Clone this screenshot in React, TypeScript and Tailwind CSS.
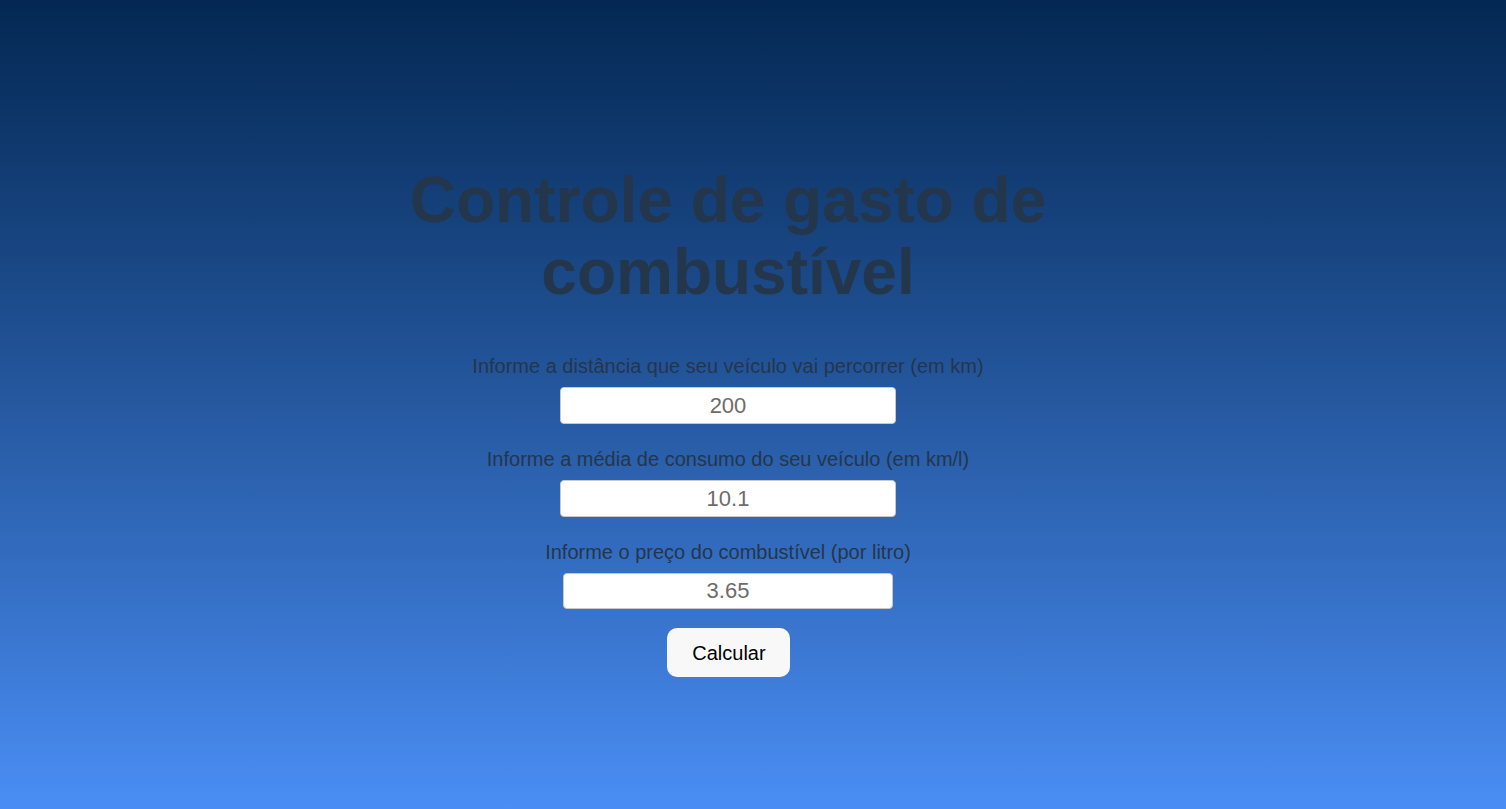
const fields = [
  { label: 'Informe a distância que seu veículo vai percorrer (em km)', value: '200', w: 'w-[336px]', h: 'h-[37px]' },
  { label: 'Informe a média de consumo do seu veículo (em km/l)', value: '10.1', w: 'w-[336px]', h: 'h-[37px]' },
  { label: 'Informe o preço do combustível (por litro)', value: '3.65', w: 'w-[330px]', h: 'h-[36px]' }
];

const App = () => {
  return (
    <div className="min-h-[809px] w-full bg-gradient-to-b from-[#042853] to-[#4a8ef5] font-['Liberation_Sans',Arial,sans-serif] pr-[50px] flex justify-center">
      <div className="w-[680px] flex flex-col items-center pt-[164px]">
        <h1 className="text-center text-[64px] leading-[72px] font-bold text-[#24364b]">
          Controle de gasto de combustível
        </h1>
        <div className="flex flex-col items-center mt-[47px]">
          {fields.map((f, i) => (
            <div key={i} className="flex flex-col items-center mb-[24px]">
              <label className="text-[20px] leading-[23px] text-[#24364b]">{f.label}</label>
              <input
                defaultValue={f.value}
                className={`${f.w} ${f.h} mt-[9px] bg-white rounded-[4px] border border-[#c8c8c8] text-center text-[22px] text-[#6f6b68] outline-none`}
              />
            </div>
          ))}
          <button className="-mt-[5px] ml-[2px] w-[123px] h-[49px] rounded-[10px] bg-[#f8f8f8] text-[20px] text-black">
            Calcular
          </button>
        </div>
      </div>
    </div>
  );
};

export default App;
